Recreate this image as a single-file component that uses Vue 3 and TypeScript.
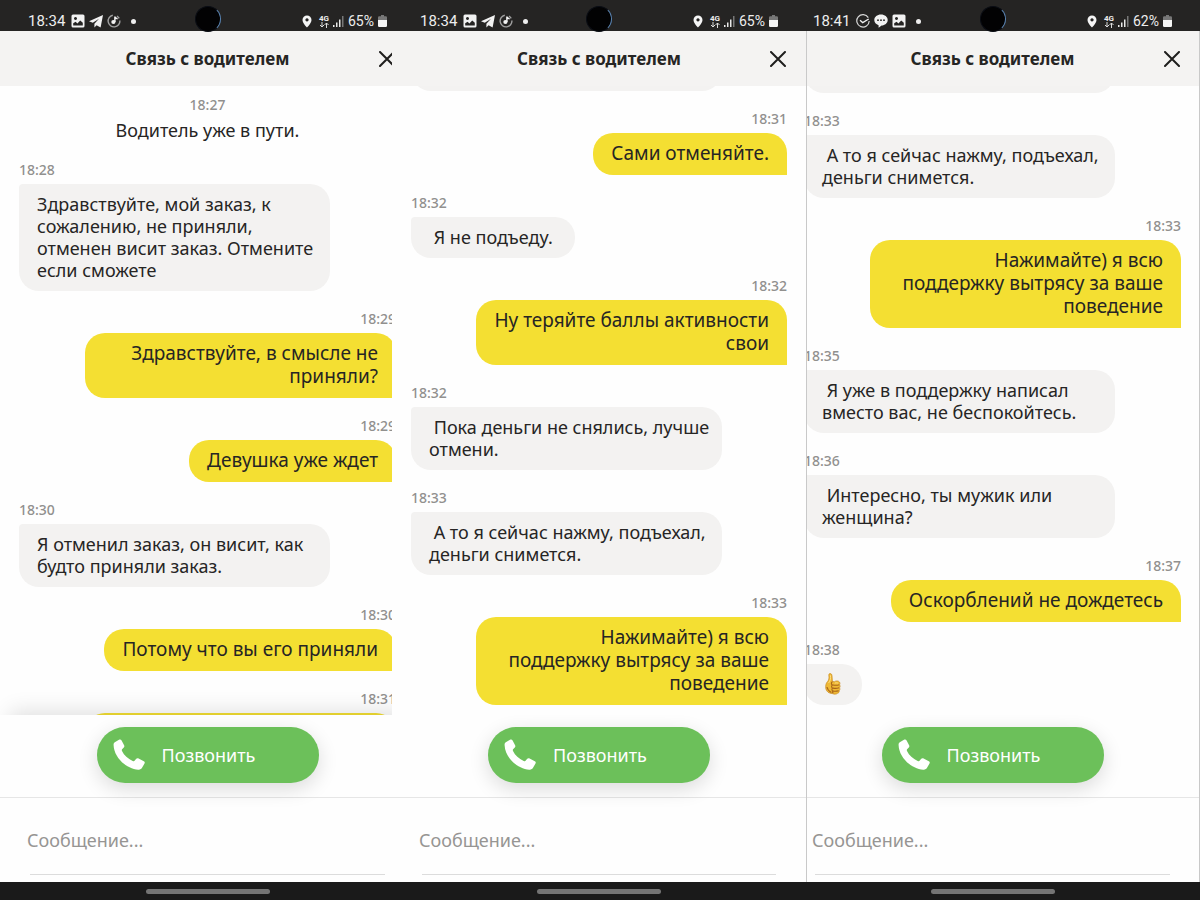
<script setup lang="ts">
import { ref } from 'vue'

type Glyph = 'image' | 'plane' | 'timer' | 'check' | 'chat'

interface Message {
  time?: string
  side: 'in' | 'out'
  text?: string
  wide?: boolean
  thumb?: boolean
  edge?: boolean
}

interface Screen {
  id: string
  clock: string
  battery: string
  glyphs: Glyph[]
  intro?: { time: string; text: string }
  messages: Message[]
}

const screens: Screen[] = [
  {
    id: 'first',
    clock: '18:34',
    battery: '65%',
    glyphs: ['image', 'plane', 'timer'],
    intro: { time: '18:27', text: 'Водитель уже в пути.' },
    messages: [
      {
        time: '18:28',
        side: 'in',
        wide: true,
        text: 'Здравствуйте, мой заказ, к\nсожалению, не приняли,\nотменен висит заказ. Отмените\nесли сможете',
      },
      { time: '18:29', side: 'out', wide: true, text: 'Здравствуйте, в смысле не\nприняли?' },
      { time: '18:29', side: 'out', text: 'Девушка уже ждет' },
      { time: '18:30', side: 'in', wide: true, text: 'Я отменил заказ, он висит, как\nбудто приняли заказ.' },
      { time: '18:30', side: 'out', text: 'Потому что вы его приняли' },
      { time: '18:31', side: 'out', wide: true, edge: true },
    ],
  },
  {
    id: 'middle',
    clock: '18:34',
    battery: '65%',
    glyphs: ['image', 'plane', 'timer'],
    messages: [
      { side: 'in', wide: true, edge: true },
      { time: '18:31', side: 'out', text: 'Сами отменяйте.' },
      { time: '18:32', side: 'in', text: ' Я не подъеду.\u00a0' },
      { time: '18:32', side: 'out', wide: true, text: 'Ну теряйте баллы активности\nсвои' },
      { time: '18:32', side: 'in', wide: true, text: ' Пока деньги не снялись, лучше\nотмени.' },
      { time: '18:33', side: 'in', wide: true, text: ' А то я сейчас нажму, подъехал,\nденьги снимется.' },
      { time: '18:33', side: 'out', wide: true, text: 'Нажимайте) я всю\nподдержку вытрясу за ваше\nповедение' },
    ],
  },
  {
    id: 'last',
    clock: '18:41',
    battery: '62%',
    glyphs: ['check', 'chat', 'image'],
    messages: [
      { side: 'in', wide: true, edge: true },
      { time: '18:33', side: 'in', wide: true, text: ' А то я сейчас нажму, подъехал,\nденьги снимется.' },
      { time: '18:33', side: 'out', wide: true, text: 'Нажимайте) я всю\nподдержку вытрясу за ваше\nповедение' },
      { time: '18:35', side: 'in', wide: true, text: ' Я уже в поддержку написал\nвместо вас, не беспокойтесь.' },
      { time: '18:36', side: 'in', wide: true, text: ' Интересно, ты мужик или\nженщина?' },
      { time: '18:37', side: 'out', text: 'Оскорблений не дождетесь' },
      { time: '18:38', side: 'in', thumb: true },
    ],
  },
]

const drafts = ref<Record<string, string>>({ first: '', middle: '', last: '' })
</script>

<template>
  <main class="board">
    <section v-for="s in screens" :key="s.id" class="pane" :class="s.id">
      <div class="phone">
        <div class="status">
          <div class="status-group">
            <span class="clock">{{ s.clock }}</span>
            <template v-for="g in s.glyphs" :key="g">
              <svg v-if="g === 'image'" class="glyph" viewBox="0 0 14 14" aria-hidden="true">
                <path fill="#f2f2f2" fill-rule="evenodd" d="M2 .5h10q1.500 0 1.500 1.500v10q0 1.500-1.500 1.500H2Q.5 13.500.5 12V2Q.5.5 2 .5ZM2.200 9.300v2.300h9.600V8.800L9.200 6.400 6.400 9.400 4.600 7.700ZM4.500 3a1.500 1.500 0 1 0 .01 0Z" />
              </svg>
              <svg v-else-if="g === 'plane'" class="glyph" viewBox="0 0 14 14" aria-hidden="true">
                <path fill="#f2f2f2" d="M14 1 0 7.300l3.800 1.500 6.200-4-4.600 5v3.600l2.200-2.200 4 2.200Z" />
              </svg>
              <svg v-else-if="g === 'timer'" class="glyph" viewBox="0 0 14 14" aria-hidden="true">
                <path d="M5.800 1.200A5.900 5.900 0 1 0 12.900 6.500" fill="none" stroke="#a0a0a0" stroke-width="1.400" />
                <path d="M10 2a5.900 5.900 0 0 1 2.200 2.400" fill="none" stroke="#a0a0a0" stroke-width="1.400" />
                <circle cx="6.400" cy="8" r="2.100" fill="#f2f2f2" />
                <path d="M7.900 8V2.600q.4 1.900 2.700 2.200" fill="none" stroke="#f2f2f2" stroke-width="1.500" />
              </svg>
              <svg v-else-if="g === 'check'" class="glyph" viewBox="0 0 14 14" aria-hidden="true">
                <path d="M12.300 3.600A6.200 6.200 0 1 0 13.200 7" fill="none" stroke="#d8d8d8" stroke-width="1.200" />
                <path d="m4 6.300 2.700 2.300 6-3.600" fill="none" stroke="#f2f2f2" stroke-width="1.300" />
              </svg>
              <svg v-else class="glyph" viewBox="0 0 14 14" aria-hidden="true">
                <path fill="#f2f2f2" d="M7 .6c3.800 0 6.700 2.400 6.700 5.500S10.800 11.600 7.600 11.600L4.600 13.800V11.200C2 10.400.3 8.500.3 6.100.3 3 3.200.6 7 .6Z" />
                <circle cx="4" cy="6.200" r=".9" fill="#252423" />
                <circle cx="7" cy="6.200" r=".9" fill="#252423" />
                <circle cx="10" cy="6.200" r=".9" fill="#252423" />
              </svg>
            </template>
            <span class="dot"></span>
          </div>
          <div class="status-group right">
            <svg class="pin" viewBox="0 0 10 13" aria-hidden="true">
              <path fill="#f5f5f5" fill-rule="evenodd" d="M5 .5a4.500 4.500 0 0 1 4.500 4.500C9.500 8.200 5 12.500 5 12.500S.5 8.200.5 5A4.500 4.500 0 0 1 5 .5ZM5 3.300a1.600 1.600 0 1 0 .01 0Z" />
            </svg>
            <span class="net">
              <span class="net-name">4G</span>
              <svg class="net-arrows" viewBox="0 0 10 6" aria-hidden="true">
                <path d="M3 0v5M1 3l2 2 2-2M7.500 6V1M5.500 3l2-2 2 2" fill="none" stroke="#dcdcdc" />
              </svg>
            </span>
            <svg class="signal" viewBox="0 0 11 11" aria-hidden="true">
              <path fill="#e8e8e8" d="M0 9h1.500v2H0zM3 6.500h1.500V11H3zM6 3.500h1.500V11H6z" />
              <path fill="#777" d="M9 0h1.500v11H9z" />
            </svg>
            <span class="percent">{{ s.battery }}</span>
            <svg class="battery" viewBox="0 0 9 12" aria-hidden="true">
              <path fill="#777" d="M3 0h3v1.200h1.800Q9 1.200 9 2.400V6H0V2.400Q0 1.200 1.200 1.200H3Z" />
              <path fill="#f5f5f5" d="M0 5h9v5.800Q9 12 7.800 12H1.200Q0 12 0 10.800Z" />
            </svg>
          </div>
          <span class="camera"></span>
        </div>

        <header class="header">
          <h1 class="title">Связь с водителем</h1>
          <button class="close" type="button" aria-label="Закрыть">
            <svg viewBox="0 0 16 16" aria-hidden="true">
              <path d="m1 1 14 14M15 1 1 15" stroke="#1f1e1d" stroke-width="2" stroke-linecap="round" />
            </svg>
          </button>
        </header>

        <div class="chat" :class="{ recent: !s.intro }">
          <div v-if="s.intro" class="intro">
            <time class="time">{{ s.intro.time }}</time>
            <p class="intro-text">{{ s.intro.text }}</p>
          </div>
          <div v-for="(m, i) in s.messages" :key="i" class="message" :class="m.side">
            <time v-if="m.time" class="time stamp">{{ m.time }}</time>
            <div class="bubble" :class="{ wide: m.wide, edge: m.edge }">
              <svg v-if="m.thumb" class="thumb" viewBox="0 0 16 22" role="img" aria-label="👍">
                <path fill="#efb935" stroke="#c98a1f" stroke-width=".7" d="M4.700.6c1.500-.3 2.200.8 2.300 2.300L7.400 8.500l2.100.2c1.200-1.100 4.300-1 5 .4.700 1.100.4 2.100 0 2.700.8.900.8 2.200 0 3 .6.900.5 2.200-.3 2.900.2 1.300-.5 2.300-1.700 2.600-1 1-3.500 1.100-5 .3C4 20.500 1.300 18.600.8 15.600.5 12.800.8 10.200 2.600 8.500 4 6.900 4.100 5.200 3.900 3.100 3.700 1.700 3.900.8 4.700.6Z" />
                <path fill="none" stroke="#a9651a" stroke-width="1.100" d="M7.400 8.700c-1.400 1.200-1.300 2.700 0 3.300-1.200 1-1 2.500.1 3.100-.9 1-.7 2.300.3 2.900-.6.900-.2 1.700.5 2.200M8 12c2 .5 4.500.3 6.300-.2M8 15.100c2 .5 4.300.3 6.100-.3M8 18c2 .4 4 .2 5.700-.3M2 14c.4 2.500 2.100 4.300 4.400 5.600" />
                <path fill="none" stroke="#ffe083" d="M5.400 2.300c.4 2.800.2 5.300-1.800 7.700M9.800 10.200c1.200-.5 2.500-.4 3.300 0" />
              </svg>
              <template v-else>{{ m.text }}</template>
            </div>
          </div>
        </div>

        <div class="call-row" :class="{ raised: s.intro }">
          <button class="call" type="button">
            <svg class="call-icon" viewBox="0 0 32 32" aria-hidden="true">
              <path fill="#fff" d="M1.800 3.300 6 .8C7.100.2 8 .5 8.600 1.500l2.500 4.700c.5 1 .3 1.900-.5 2.600L9.300 10c-.6.600-.6 1.200-.3 2 2.200 4.500 5.800 7.700 10.700 10 .8.400 1.500.3 2.100-.4l1.200-1.500c.7-.9 1.600-1.100 2.600-.6l5.200 2.700c1 .5 1.200 1.400.7 2.400l-2.300 4c-.8 1.600-2 2.200-3.900 2.100C13.500 30 1.100 18.800.6 6.300.5 4.900.8 4 1.800 3.300Z" />
            </svg>
            <span>Позвонить</span>
          </button>
        </div>

        <form class="composer" @submit.prevent>
          <input v-model="drafts[s.id]" class="field" type="text" placeholder="Сообщение..." aria-label="Сообщение" />
        </form>
        <div class="nav"><span class="handle"></span></div>
      </div>
    </section>
  </main>
</template>

<style>
body {
  margin: 0;
  background: #fff;
}
</style>

<style scoped>
.board {
  display: grid;
  grid-template-columns: 392fr 414fr 394fr;
  height: 100vh;
  font-family: 'Noto Sans', 'Open Sans', sans-serif;
  color: #262524;
  background: #fefefe;
}
.pane {
  position: relative;
  min-width: 0;
  overflow: hidden;
}
.phone {
  display: flex;
  flex-direction: column;
  height: 100%;
}
.first .phone {
  margin-right: -23px;
}
.last .phone {
  margin-left: -21px;
}
.last::after {
  content: '';
  position: absolute;
  inset: 31px 0 18px;
  border: solid #c9c9c9;
  border-width: 0 1px;
  pointer-events: none;
}

.status {
  position: relative;
  z-index: 1;
  flex: none;
  display: flex;
  justify-content: space-between;
  height: 31px;
  padding: 11px 28px 0;
  box-sizing: border-box;
  background: #252423;
  color: #ededed;
  font-family: Roboto, sans-serif;
  font-size: 14px;
  line-height: 20px;
}
.status-group {
  display: flex;
  align-items: center;
  gap: 4px;
}
.clock {
  font-size: 15px;
  margin-right: 2px;
}
.glyph {
  width: 14px;
  height: 14px;
}
.dot {
  width: 5px;
  height: 5px;
  margin-left: 6px;
  border-radius: 50%;
  background: #eee;
}
.pin {
  width: 10px;
  height: 13px;
  margin-right: 3px;
}
.net {
  display: flex;
  flex-direction: column;
  align-items: center;
}
.net-name {
  font-size: 8px;
  line-height: 7px;
  font-weight: 700;
}
.net-arrows {
  width: 10px;
  height: 6px;
}
.signal {
  width: 11px;
  height: 11px;
}
.battery {
  width: 9px;
  height: 12px;
}
.camera {
  position: absolute;
  top: 6px;
  left: 50%;
  width: 24px;
  height: 24px;
  margin-left: -13px;
  border: 1px solid #0a0d14;
  border-right-color: #5b86b5;
  border-radius: 50%;
  background: #020203;
}

.header {
  position: relative;
  flex: none;
  display: flex;
  align-items: center;
  justify-content: center;
  height: 55px;
  background: #f4f3f2;
}
.title {
  margin: 0;
  font-size: 17px;
  line-height: 24px;
  font-weight: 700;
}
.close {
  position: absolute;
  top: 16px;
  right: 16px;
  width: 24px;
  height: 24px;
  padding: 4px;
  border: 0;
  background: none;
}
.close svg {
  display: block;
  width: 16px;
  height: 16px;
}

.chat {
  flex: 1;
  min-height: 0;
  display: flex;
  flex-direction: column;
  padding: 0 19px;
  overflow: hidden;
}
.chat.recent {
  justify-content: flex-end;
  padding-bottom: 10px;
}
.time {
  display: block;
  color: #91908e;
  font-size: 14px;
  line-height: 18px;
  font-weight: 500;
}
.intro {
  padding-top: 10px;
  text-align: center;
}
.intro-text {
  margin: 4px 0 0;
  font-size: 18px;
  line-height: 24px;
}
.message {
  flex: none;
  display: flex;
  flex-direction: column;
  align-items: flex-start;
}
.message.out {
  align-items: flex-end;
}
.stamp {
  padding: 19px 0 5px;
}
.bubble {
  box-sizing: border-box;
  padding: 9px 18px 10px;
  font-size: 18px;
  line-height: 22px;
  white-space: pre-wrap;
  background: #f3f2f1;
  border-radius: 4px 20px 20px 20px;
}
.wide {
  width: 311px;
  max-width: 100%;
  padding-right: 0;
}
.out .bubble {
  padding: 9px 18px 10px;
  font-size: 19px;
  line-height: 23px;
  text-align: right;
  background: #f4df32;
  border-radius: 20px 20px 0 20px;
}
.edge {
  min-height: 65px;
}
.thumb {
  display: block;
  width: 16px;
  height: 22px;
  margin: 0 3px;
}

.call-row {
  position: relative;
  flex: none;
  display: flex;
  justify-content: center;
  padding: 12px 0 14px;
  border-bottom: 1px solid #e6e6e6;
}
.raised {
  background: #fefefe;
  box-shadow: 0 -14px 20px -10px rgba(0, 0, 0, 0.12);
}
.call {
  display: flex;
  align-items: center;
  gap: 17px;
  width: 222px;
  height: 56px;
  padding: 0 16px;
  border: 0;
  border-radius: 28px;
  background: #6cc05a;
  box-shadow: 0 6px 20px rgba(0, 0, 0, 0.14);
  color: #fff;
  font: inherit;
  font-size: 18px;
}
.call-icon {
  width: 32px;
  height: 32px;
}
.composer {
  flex: none;
  padding: 21px 30px 7px 27px;
}
.composer::after {
  content: '';
  display: block;
  height: 1px;
  margin-left: 3px;
  background: #dcdcdc;
}
.field {
  display: block;
  width: 100%;
  height: 55px;
  padding: 0 0 14px;
  box-sizing: border-box;
  border: 0;
  outline: 0;
  background: none;
  font: inherit;
  font-size: 18px;
  color: inherit;
}
.field::placeholder {
  color: #969593;
  opacity: 1;
}
.nav {
  flex: none;
  display: flex;
  align-items: center;
  justify-content: center;
  height: 18px;
  background: #1a1a1a;
}
.handle {
  width: 124px;
  height: 5px;
  border-radius: 3px;
  background: #747474;
}
</style>
